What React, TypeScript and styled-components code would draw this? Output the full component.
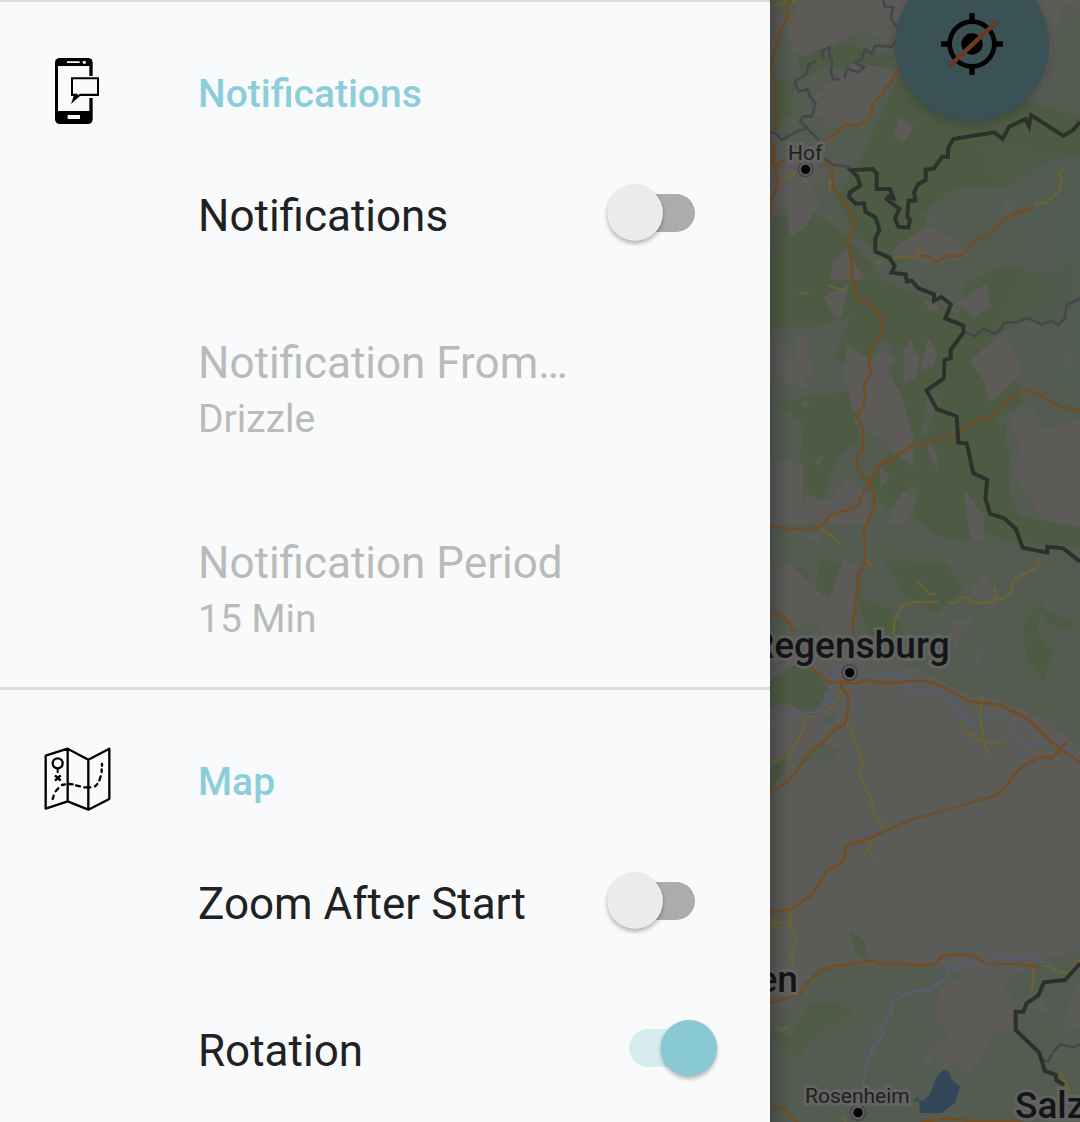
import React, { useState } from "react";
import styled, { createGlobalStyle } from "styled-components";

const GlobalStyle = createGlobalStyle`
  *, *::before, *::after { box-sizing: border-box; }
  body { margin: 0; background: #f8fafc; font-family: Roboto, "Liberation Sans", sans-serif; }
`;

const Screen = styled.div`
  display: grid;
  grid-template-columns: minmax(0, 77fr) minmax(0, 31fr);
  height: 100vh;
  overflow: hidden;
`;

const Drawer = styled.aside`
  background: #f8fafc;
  overflow-y: auto;
  scrollbar-width: none;
`;

const Section = styled.section`
  display: grid;
  grid-template-columns: 155px minmax(0, 1fr);
  column-gap: 43px;
  border-top: 3px solid #d9dadc;
  &:first-child { border-top-width: 2px; }
`;

const SectionIcon = styled.div`
  display: flex;
  justify-content: center;
  align-items: center;
  height: 140px;
  padding-bottom: 4px;
  padding-top: 42px;
`;

const SectionTitle = styled.h2`
  margin: 0;
  padding-top: 68px;
  height: 140px;
  font-size: 39px;
  line-height: 48px;
  font-weight: 500;
  color: #8bced9;
`;

const SwitchRow = styled.label`
  display: flex;
  align-items: center;
  justify-content: space-between;
  height: 147px;
  padding-right: 53px;
  font-size: 44px;
  line-height: 56px;
  color: #212121;
`;

const ChoiceRow = styled.button`
  display: block;
  width: 100%;
  padding: 46px 53px 42px 0;
  border: 0;
  background: none;
  text-align: left;
  font-family: inherit;
  color: #b9bbba;
  &:last-child { padding-bottom: 40px; }
`;

const ChoiceTitle = styled.span`
  display: block;
  font-size: 44px;
  line-height: 56px;
`;

const ChoiceValue = styled.span`
  display: block;
  font-size: 39px;
  line-height: 56px;
`;

const Toggle = styled.input`
  appearance: none;
  display: flex;
  align-items: center;
  flex: none;
  width: 110px;
  height: 56px;
  margin: 0 0 5px;
  position: relative;
  &::before {
    content: "";
    position: absolute;
    left: 22px;
    top: 9px;
    width: 66px;
    height: 38px;
    border-radius: 19px;
    background: #abacae;
  }
  &::after {
    content: "";
    position: relative;
    width: 56px;
    height: 56px;
    border-radius: 50%;
    background: #ebebeb;
    box-shadow: 0 3px 4px rgba(0, 0, 0, 0.26), 0 0 2px rgba(0, 0, 0, 0.12);
  }
  &:checked { justify-content: flex-end; }
  &:checked::before { background: #d6ecef; }
  &:checked::after { background: #89c9d3; }
`;

const MapPane = styled.main`
  position: relative;
  overflow: hidden;
  background: #5b5c58;
`;

const MapDrawing = styled.svg`
  display: block;
  width: 100%;
  height: 100%;
`;

const EdgeShade = styled.div`
  position: absolute;
  inset: 0 auto 0 0;
  width: 20px;
  background: linear-gradient(90deg, rgba(0, 0, 0, 0.2), transparent);
`;

const Place = styled.span<{ $x: number; $y: number; $city?: boolean }>`
  position: absolute;
  left: ${(p) => p.$x}px;
  top: ${(p) => p.$y}px;
  font-size: ${(p) => (p.$city ? 37 : 21)}px;
  line-height: 1;
  white-space: nowrap;
  font-weight: ${(p) => (p.$city ? 500 : 400)};
  color: ${(p) => (p.$city ? "#141518" : "#1f2020")};
  -webkit-text-stroke: 6px #626361;
  paint-order: stroke fill;
`;

const LocateButton = styled.button`
  position: absolute;
  top: -33px;
  right: 31px;
  width: 154px;
  height: 154px;
  padding: 0;
  border: 0;
  border-radius: 50%;
  background: #3a5156;
  box-shadow: 0 4px 10px rgba(0, 0, 0, 0.18);
  display: grid;
  place-items: center;
`;

function PhoneIcon() {
  return (
    <svg width="45" height="66" viewBox="75 54 135 198" aria-hidden="true">
      <rect x="75" y="54" width="113" height="198" rx="14" />
      <path fill="#f8fafc" d="M84 78h94v135H84zM111 64h38v5h-38zM113 225h37v12h-37z" />
      <circle cx="163" cy="67" r="5" fill="#f8fafc" />
      <path fill="#f8fafc" d="M118 108h90v66h-56l-30 18h-4z" />
      <path d="M123 112h84v56h-57l-27 24 8-24h-8z" />
      <path fill="#f8fafc" d="M129 118h72v43h-52l-5 5-2-5h-13z" />
    </svg>
  );
}

function FoldedMapIcon() {
  return (
    <svg width="67" height="64" viewBox="41 50 201 192" fill="none" stroke="#000" strokeWidth="7" aria-hidden="true">
      <path strokeLinejoin="round" d="M46 76 112 55 174 88 237 55V206L174 238 112 213 46 235ZM112 55V213M174 88V238" />
      <circle cx="82" cy="99" r="15" strokeWidth="7" />
      <path strokeWidth="6" d="M82 114V128" />
      <path strokeWidth="7" d="M74 135 91 151M91 135 74 151" />
      <path strokeLinecap="round" d="M67 206 70 196M76 183 84 174M95 164 104 162M116 161 127 162M137 165 149 168M162 171 180 171M194 168 201 161M207 150 211 138M214 125V117M215 106V101" />
    </svg>
  );
}

function LocateOffIcon() {
  return (
    <svg width="62" height="62" viewBox="0 0 186 186" fill="none" stroke="#000" aria-hidden="true">
      <circle cx="93" cy="93" r="67" strokeWidth="14" />
      <circle cx="93" cy="93" r="32" fill="#000" stroke="none" />
      <path strokeWidth="16" d="M93 0V24M93 162V186M0 93H24M162 93H186" />
      <path stroke="#6b3a25" strokeWidth="14" d="M24 160 165 28" />
    </svg>
  );
}

const forest = "#4d5b44";
const hills = "#545c51";
const field = "#5c5b58";
const plain = "#5b5c57";

function Terrain() {
  return (
    <MapDrawing viewBox="0 0 930 3366" preserveAspectRatio="xMinYMin slice" role="img" aria-label="Map of eastern Bavaria">
      <defs>
        <linearGradient id="haze" x1="0" x2="1">
          <stop offset="0" stopColor="#525b51" stopOpacity="0" />
          <stop offset="1" stopColor="#525c55" />
        </linearGradient>
      </defs>
      <rect width="930" height="3366" fill={field} />
      {/* Fichtel and Ore mountains */}
      <path fill={hills} d="M0 0H90L50 110 170 150 260 90 375 100 420 330 930 260V1680H0V660L80 600 170 520 0 380Z" />
      <path fill={forest} d="M80 165 230 130 375 170 350 210 160 200 100 240ZM20 245 80 240 60 350 20 360ZM390 220 450 300 610 370 760 300 930 350V470L800 500 720 560 560 560 480 620 440 760 370 800 250 700 200 590 270 480Z" />
      <path fill={forest} d="M10 660 120 620 260 740 350 850 500 900 590 980 540 1070 560 1200 470 1180 450 1330 350 1340 370 1040 330 1010 290 1110 190 1080 240 950 130 980 0 980V780Z" />
      <path fill={forest} d="M590 850 700 800 830 820 930 760V890L880 970 760 960 670 1010 650 1120 560 1150 540 1050Z" />
      <path fill={forest} d="M20 1210 240 1170 270 1320 200 1370 150 1530 60 1530 0 1460 90 1380 100 1270ZM540 1080 650 1070 740 1140 760 1210 680 1260 720 1360 720 1490 640 1530 560 1480 490 1530 430 1450 350 1530 300 1440 370 1330 470 1310Z" />
      <path fill={forest} d="M650 1330 710 1270 690 1440 750 1550 930 1580V1690L780 1680 660 1600 560 1650 430 1550 440 1480 600 1460Z" />
      <path fill={hills} d="M880 0 930 40V290L820 310 840 180ZM650 560 720 620 860 700 930 680V760L780 800 600 790 700 690 610 700 480 670 560 610Z" />
      {/* open ground between the woods */}
      <g fill={field}>
        <path d="M100 0 350 0 380 60 350 130 280 90 180 130 110 170 60 150ZM130 290 250 190 380 210 310 310 270 370 190 380 140 340ZM40 540 100 540 150 600 110 680 60 710ZM380 740 470 675 570 730 580 780 450 790 360 760ZM190 790 230 750 290 840H180ZM700 610 750 585 735 620 690 650ZM460 640 500 650 480 675ZM0 20 50 30 20 130 0 170ZM390 350 430 380 400 430 370 410Z" />
        <path d="M0 1010 50 1040 130 1180 90 1160 0 1140ZM75 1010 110 1000 130 1150 80 1090ZM230 1030 300 1080 300 1200 250 1240 220 1130ZM330 1050 380 1080 350 1100 400 1200 430 1310 430 1400 380 1370 330 1310 250 1270 290 1210 300 1090ZM400 1050 420 1020 450 1080 440 1130 400 1150ZM475 1010 500 1060 490 1100 450 1110ZM560 910 650 850 660 920 610 950ZM600 1080 710 990 760 1120 660 1210 640 1140Z" />
        <path d="M160 890 240 850 210 960 180 930ZM460 900 490 905 510 925 480 935ZM90 1210 110 1200 120 1215 100 1225ZM130 1380 160 1365 150 1400ZM330 1400 360 1430 330 1470ZM470 1310 500 1360 505 1420 480 1370ZM110 1600 160 1595 150 1625 105 1620Z" />
        <path d="M70 1570 110 1480 170 1510 240 1430 300 1500 290 1570 200 1570ZM350 1570 400 1470 440 1500 400 1580ZM580 1470 640 1540 650 1670 610 1680ZM720 1270 780 1210 820 1290 930 1260V1580L820 1560 730 1420 750 1350ZM0 1370 100 1390 100 1550 0 1590ZM870 1090 890 1030 920 1110Z" />
      </g>
      <path fill="url(#haze)" d="M610 430 930 470V1160L760 1130 680 970 790 760Z" opacity=".6" />
      {/* Bavarian forest */}
      <path fill={hills} d="M0 1690 470 1610 930 1640V2250L840 2170 760 2130 690 2100 590 2080 450 2010 280 1960 0 1900Z" />
      <path fill={forest} d="M150 1680 220 1690 180 1860 130 1810ZM260 1790 370 1830 410 1930 300 1930ZM340 1680 530 1690 580 1770 500 1840 400 1780ZM760 1870 820 1800 800 1900 850 1960 820 2040 770 1980ZM820 1830 910 1870 900 1890 830 1870ZM0 2040 100 1980 180 2070 130 2150 50 2110 0 2120ZM0 2300 50 2260 30 2400H0ZM60 1690 120 1740 110 1710Z" />
      <path fill={field} d="M220 1680 260 1690 250 1910 160 1940 150 1870ZM0 1700 60 1690 130 1760 180 1800 160 1860 60 1880 0 1800ZM600 1770 650 1720 690 1810 660 1830ZM550 1860 610 1850 600 1880 570 1900 560 1960 540 1920ZM610 1970 640 1940 620 2000Z" />
      <path fill={plain} d="M210 2070 450 2035 590 2110 720 2170 860 2255 930 2300V2860L690 2900 500 2880 300 2870 0 2950V2370L90 2250Z" />
      <path fill={hills} d="M110 2240 150 2230 220 2250 190 2280 90 2280ZM150 2150 200 2140 180 2180Z" />
      {/* Alpine foothills */}
      <path fill={hills} d="M0 3080 70 3000 150 2900 370 2890 530 2900 500 3010 500 3070 530 3090 530 3120 490 3160 520 3210 550 3180 590 3230 650 3150 680 3090 730 3100 740 3020 700 2950 790 2890 930 2850V3366H0Z" />
      <path fill={forest} opacity=".8" d="M0 3090 60 3110 120 3010 210 3010 250 3040 150 3090 90 3170 20 3120ZM235 2790 285 2820 295 2880 260 2860Z" />
      <path fill={hills} d="M500 2930 540 2910 580 2930 520 2960Z" />
      <path fill={plain} d="M470 3150 510 3120 490 3170 460 3220ZM305 3100 330 3070 320 3150 300 3180ZM790 3020 820 2990 830 3030 810 3040ZM880 3080 910 2970 930 2950V3080L900 3100ZM440 3040 500 2990 470 3030Z" />
      <path fill="#33475a" d="m430 3305 30-3 20-20 20-50 20-23 15 5 10 25 25 20-15 50-40 30H450l-5-50Z" />

      <g fill="none" strokeLinejoin="round" strokeLinecap="round">
        {/* rivers */}
        <g stroke="#535f70" strokeWidth="7">
          <path d="M0 2200 10 2163 40 2160 60 2138 130 2138 160 2112 190 2110 165 2085 195 2050 190 2010 230 2005 285 2025 310 2035 340 2018 385 2020 425 2035 412 2072 515 2080 530 2093 565 2108 550 2130 580 2135 570 2148 600 2166 650 2145 690 2152 730 2175 750 2230 785 2237 820 2215 870 2225 930 2285" />
          <path d="M280 3250 285 3210 305 3150 345 3098 330 3090 365 3035 360 3010 420 2973 470 2975 505 2950 540 2925 525 2903 640 2890 700 2873 755 2880 785 2865 805 2885 840 2890 865 2930" />
        </g>
        {/* minor roads */}
        <g stroke="#6b6432" strokeWidth="7">
          <path d="M0 17 80 0M30 540 72 520M102 538 112 552M180 572V540M320 788 340 785M370 780 375 773 445 770 448 742M795 612 830 608 870 570 875 540 865 525 878 510M90 881 115 877M175 857 225 872M155 1585 205 1627" />
          <path d="M370 1900 375 1855 400 1813 440 1806 500 1805M445 1748 480 1783 495 1783M537 1808 560 1807 578 1790 620 1810 660 1808 680 1795 673 1760M680 1795 705 1795 725 1770 730 1740 805 1700V1675M285 1680 303 1697M635 2087 632 2160 642 2220M575 2178 600 2205 640 2225 698 2229M640 2225 660 2265M230 2170 245 2200 278 2280 265 2320 305 2400 310 2440 342 2482M215 2070 195 2115 160 2135M130 2148 105 2150 100 2190 55 2268 0 2290M308 2520 285 2560M300 2555 310 2575M60 2725V2775L80 2820 65 2850 70 2895M0 2768H60M0 2780H25M790 2900V2950L785 2970M820 2898 850 2902 880 2920 900 2915 930 2880M105 2970 115 2980M20 3080 35 3092 52 3080M875 3220 900 3275M225 3350V3366" />
        </g>
        {/* motorways and trunk roads */}
        <g stroke="#754c20" strokeWidth="7">
          <path d="M65 0 50 12 57 43 30 100 8 180 0 210 20 255 15 280 20 350 15 385 0 400M0 425 12 440 8 480 25 550 0 610V650M15 500 45 480M163 420 200 400 225 375 275 373 303 350 307 315 350 265 385 210M163 482 185 500 190 560 230 620 250 645 248 660 257 675 232 720 245 780V840" />
          <path d="M450 768 470 768 500 785 535 765 570 768 590 755 620 720 665 700 695 660 740 640 790 620M245 840 258 855 253 880 270 908 295 910 340 960 330 1010 310 1035 295 1080 303 1120 283 1155 285 1200 263 1250 280 1290 280 1345 260 1375 265 1415 300 1450 312 1475 314 1515 282 1590 285 1690 262 1730 265 1775 255 1800 257 1830 248 1865V1900" />
          <path d="M0 1575 20 1583 90 1588 150 1582 180 1545 265 1520 270 1495 297 1450 315 1425 320 1400 340 1385 360 1390 385 1360 410 1350 430 1330 465 1335 500 1315 550 1310 610 1265 660 1250 695 1225 720 1192 780 1172 830 1195 870 1220 930 1230M0 1839 35 1845 60 1870 72 1900M127 2005 175 2047 215 2047 250 2050 300 2040 350 2052 390 2045 460 2042 520 2060 600 2105 690 2115 775 2158 840 2222 880 2253 930 2285" />
          <path d="M215 2040V2065L235 2085V2130L225 2170 180 2200 165 2222 130 2245 50 2350 0 2377M888 2230 845 2275 815 2268 755 2300 720 2340 710 2360 675 2388 420 2460 305 2512 285 2520 230 2535 220 2585 170 2613 125 2685 60 2730 0 2737" />
          <path d="M0 3010 85 2985 110 2950 150 2912 200 2897 305 2883 340 2892 400 2890 440 2895 495 2893 515 2868 570 2863 610 2867 645 2890 740 2892 800 2900M0 3317 45 3327 80 3366M455 3366 530 3355 600 3362H750" />
        </g>
        {/* state borders */}
        <g stroke="#47464d" strokeWidth="8">
          <path d="M340 0 345 20 370 22 362 55 380 80M375 125 365 140 315 137 305 163 285 147 275 180 252 188 284 200 265 216 230 206 225 232M207 237 190 238 183 218 187 180 178 172V140L155 155 160 172M135 185 115 195 110 220 75 245 85 274 113 268 120 290 137 310 125 350 100 348 90 362 112 385 145 418M0 395 20 403 35 420 75 397 105 387M165 477 190 495 240 500" />
          <path d="M583 996 615 1008 640 985 673 1002 695 985 700 970 750 965 770 953 815 973 845 963 865 975 885 955 890 915 930 897M930 3134 910 3142 870 3133 850 3155M845 3165 835 3185 820 3180" />
        </g>
        {/* national border */}
        <g stroke="#2c312b" strokeWidth="12" strokeLinejoin="miter" strokeLinecap="butt">
          <path d="M930 365 910 390 880 408 783 345 777 378 767 357 717 380 698 417 673 397 550 417 534 445V470L517 470 492 505 467 509V540L445 552 432 577 436 601 416 602 412 650 420 660 415 683 385 680 375 655 388 627 350 597 355 590 370 595 360 567H320V520L308 507 243 511 262 530 271 557 240 577 237 591 258 611 282 610 287 635 317 653 328 690 316 715V754L357 772 374 797 365 818 407 823 411 845 425 842 445 864 492 883V902L514 891 543 913 526 955 580 977V998L542 1050V1075L524 1080 521 1135 470 1171 500 1227 560 1249 565 1328 590 1330 610 1420 652 1439 646 1495 660 1541 702 1554 737 1586 758 1643 832 1658V1640L880 1645 930 1685" />
          <path d="M930 2890 885 2940 822 2947 805 2986 770 3010 760 3035H737V3090L807 3157 825 3213 858 3225V3240L882 3255" />
        </g>
      </g>
      {/* town markers */}
      <g fill="#5f5f5d" stroke="#454544" strokeWidth="5">
        <circle cx="107" cy="508" r="22" />
        <circle cx="239" cy="2018" r="23" />
        <circle cx="264" cy="3338" r="23" />
      </g>
      <g fill="#050505">
        <circle cx="107" cy="508" r="14" />
        <circle cx="239" cy="2018" r="14" />
        <circle cx="264" cy="3338" r="14" />
      </g>
    </MapDrawing>
  );
}

function SwitchSetting({ label, initial }: { label: string; initial: boolean }) {
  const [on, setOn] = useState(initial);
  return (
    <SwitchRow>
      {label}
      <Toggle type="checkbox" role="switch" checked={on} onChange={(e) => setOn(e.target.checked)} />
    </SwitchRow>
  );
}

function ChoiceSetting({ label, value }: { label: string; value: string }) {
  return (
    <ChoiceRow disabled>
      <ChoiceTitle>{label}</ChoiceTitle>
      <ChoiceValue>{value}</ChoiceValue>
    </ChoiceRow>
  );
}

export default function App() {
  return (
    <>
      <GlobalStyle />
      <Screen>
        <Drawer>
          <Section>
            <SectionIcon><PhoneIcon /></SectionIcon>
            <div>
              <SectionTitle>Notifications</SectionTitle>
              <SwitchSetting label="Notifications" initial={false} />
              <ChoiceSetting label="Notification From…" value="Drizzle" />
              <ChoiceSetting label="Notification Period" value="15 Min" />
            </div>
          </Section>
          <Section>
            <SectionIcon><FoldedMapIcon /></SectionIcon>
            <div>
              <SectionTitle>Map</SectionTitle>
              <SwitchSetting label="Zoom After Start" initial={false} />
              <SwitchSetting label="Rotation" initial={true} />
            </div>
          </Section>
        </Drawer>
        <MapPane>
          <Terrain />
          <Place $x={18} $y={143}>Hof</Place>
          <Place $x={-19} $y={627} $city>Regensburg</Place>
          <Place $x={-126} $y={961} $city>München</Place>
          <Place $x={35} $y={1086}>Rosenheim</Place>
          <Place $x={245} $y={1087} $city>Salzburg</Place>
          <EdgeShade />
          <LocateButton aria-label="Follow my location"><LocateOffIcon /></LocateButton>
        </MapPane>
      </Screen>
    </>
  );
}
